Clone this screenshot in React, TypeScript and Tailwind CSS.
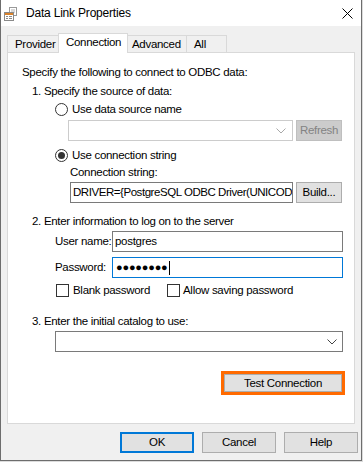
import React from "react";

function Radio({ checked }: { checked?: boolean }) {
  return (
    <div className="w-[13px] h-[13px] rounded-full border border-[#333333] bg-white flex items-center justify-center shrink-0">
      {checked && <div className="w-[7px] h-[7px] rounded-full bg-[#333333]" />}
    </div>
  );
}

function Check() {
  return <div className="w-[13px] h-[13px] border border-[#333333] bg-white shrink-0" />;
}

function Chevron({ color }: { color: string }) {
  return (
    <svg width="10" height="6" viewBox="0 0 10 6" className="shrink-0">
      <path d="M0.5 0.5 L5 5 L9.5 0.5" fill="none" stroke={color} strokeWidth="1" />
    </svg>
  );
}

function Btn({ children, w, focused }: { children: React.ReactNode; w: string; focused?: boolean }) {
  return (
    <div
      className={
        "h-[21px] bg-[#e1e1e1] flex items-center justify-center " +
        w +
        (focused ? " border-2 border-[#0078d7]" : " border border-[#adadad]")
      }
    >
      {children}
    </div>
  );
}

export default function App() {
  return (
    <div className="w-[363px] h-[462px] bg-[#dcdcdc] font-['Liberation_Sans',Arial,sans-serif] text-[11.5px] tracking-[-0.3px] text-black leading-[15px] whitespace-nowrap">
      <div className="w-[362px] h-[461px] border-x border-b border-[#6d6d6d] bg-[#f0f0f0] flex flex-col">
        {/* title bar */}
        <div className="h-[26px] bg-white flex items-center shrink-0">
          <svg width="16" height="16" viewBox="0 0 16 16" className="ml-[2px] mt-[2px]">
            <rect x="6.5" y="1.5" width="7" height="8" fill="#ffffff" stroke="#9a9a9a" />
            <line x1="8" y1="4" x2="12" y2="4" stroke="#b0b0b0" />
            <line x1="8" y1="6" x2="12" y2="6" stroke="#b0b0b0" />
            <rect x="1.5" y="6.5" width="9" height="8" fill="#ffffff" stroke="#8a8a8a" />
            <rect x="2" y="7" width="8" height="2" fill="#d9822b" />
            <rect x="3" y="10" width="2" height="1" fill="#8a8a8a" />
            <rect x="6" y="10" width="3" height="1" fill="#8a8a8a" />
            <rect x="3" y="12" width="2" height="1" fill="#8a8a8a" />
            <rect x="6" y="12" width="3" height="1" fill="#8a8a8a" />
          </svg>
          <span className="ml-[7px] text-[12px] tracking-[-0.2px]">Data Link Properties</span>
          <div className="flex-1" />
          <svg width="11" height="11" viewBox="0 0 11 11" className="mr-[8px] mt-[1px]">
            <path d="M0.5 0.5 L10.5 10.5 M10.5 0.5 L0.5 10.5" stroke="#000" strokeWidth="1" />
          </svg>
        </div>

        {/* tabs */}
        <div className="h-[26px] flex items-end pl-[6px] shrink-0">
          <div className="w-[51px] h-[17px] border-l border-t border-[#d9d9d9] pl-[7px] flex items-center">Provider</div>
          <div className="relative z-10 w-[70px] h-[20px] -mb-[1px] border-l border-t border-r border-[#d9d9d9] bg-white pl-[7px] pb-[2px] flex items-center">
            Connection
          </div>
          <div className="w-[59px] h-[17px] border-t border-r border-[#d9d9d9] pl-[4px] flex items-center">Advanced</div>
          <div className="w-[40px] h-[17px] border-t border-r border-[#d9d9d9] pl-[7px] flex items-center">All</div>
        </div>

        {/* panel */}
        <div className="ml-[6px] w-[348px] h-[372px] border border-[#d9d9d9] bg-white flex flex-col shrink-0">
          <div className="mt-[12px] ml-[14px] h-[15px]">Specify the following to connect to ODBC data:</div>
          <div className="mt-[4px] ml-[24px] h-[15px]">1. Specify the source of data:</div>
          <div className="mt-[3px] ml-[47px] h-[15px] flex items-center">
            <Radio />
            <span className="ml-[4px]">Use data source name</span>
          </div>
          <div className="mt-[3px] ml-[60px] h-[21px] flex">
            <div className="w-[225px] h-[21px] border border-[#cccccc] bg-white flex items-center justify-end pr-[6px]">
              <Chevron color="#a8a8a8" />
            </div>
            <div className="ml-[3px] w-[46px] h-[21px] border border-[#bfbfbf] bg-[#cccccc] text-[#838383] flex items-center justify-center">
              Refresh
            </div>
          </div>
          <div className="mt-[7px] ml-[47px] h-[15px] flex items-center">
            <Radio checked />
            <span className="ml-[4px]">Use connection string</span>
          </div>
          <div className="mt-[2px] ml-[62px] h-[15px]">Connection string:</div>
          <div className="mt-[2px] ml-[62px] h-[21px] flex">
            <div className="w-[223px] h-[21px] border border-[#7a7a7a] bg-white flex items-center pl-[2px] overflow-hidden">
              <span className="tracking-[-0.45px]">DRIVER={"{"}PostgreSQL ODBC Driver(UNICOD</span>
            </div>
            <div className="ml-[3px] w-[46px] h-[21px] border border-[#adadad] bg-[#e1e1e1] flex items-center justify-center">
              Build...
            </div>
          </div>
          <div className="mt-[11px] ml-[24px] h-[15px]">2. Enter information to log on to the server</div>
          <div className="mt-[2px] ml-[47px] h-[21px] flex items-center">
            <span className="w-[57px]">User name:</span>
            <div className="w-[231px] h-[21px] border border-[#7a7a7a] bg-white flex items-center pl-[2px]">postgres</div>
          </div>
          <div className="mt-[5px] ml-[47px] h-[21px] flex items-center">
            <span className="w-[57px]">Password:</span>
            <div className="w-[231px] h-[21px] border border-[#0078d7] bg-white flex items-center pl-[3px]">
              <span className="tracking-[-0.2px] text-[11px]">●●●●●●●●</span>
              <div className="w-px h-[14px] bg-black ml-[1px]" />
            </div>
          </div>
          <div className="mt-[6px] ml-[48px] h-[13px] flex items-center">
            <Check />
            <span className="ml-[4px] w-[94px]">Blank password</span>
            <Check />
            <span className="ml-[3px]">Allow saving password</span>
          </div>
          <div className="mt-[17px] ml-[24px] h-[15px]">3. Enter the initial catalog to use:</div>
          <div className="mt-[2px] ml-[47px] w-[288px] h-[21px] border border-[#7a7a7a] bg-white flex items-center justify-end pr-[5px]">
            <Chevron color="#444444" />
          </div>
          <div className="mt-[19px] ml-[213px] w-[124px] h-[24px] border-[3px] border-[#ff6a00] flex">
            <div className="flex-1 bg-[#e1e1e1] border border-[#adadad] flex items-center justify-center">Test Connection</div>
          </div>
        </div>

        {/* buttons */}
        <div className="mt-[8px] flex pl-[119px] gap-[8px]">
          <Btn w="w-[74px]" focused>OK</Btn>
          <Btn w="w-[74px]">Cancel</Btn>
          <Btn w="w-[74px]">Help</Btn>
        </div>
      </div>
    </div>
  );
}
